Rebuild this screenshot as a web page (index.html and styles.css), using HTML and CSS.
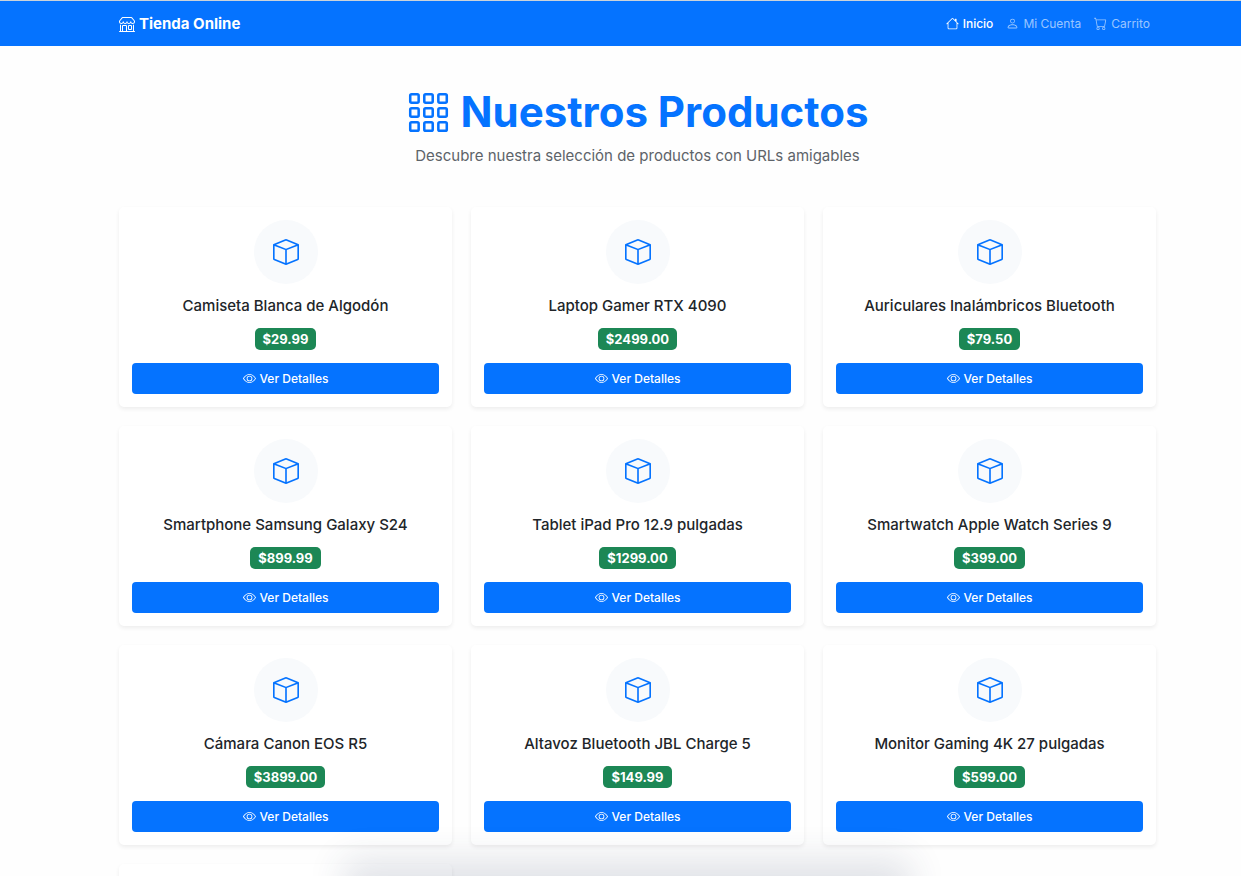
FILE: index.html
```html
<!DOCTYPE html>
<html lang="es">
<head>
<meta charset="utf-8">
<meta name="viewport" content="width=device-width, initial-scale=1">
<title>Tienda Online</title>
<link rel="stylesheet" href="styles.css">
</head>
<body>
<svg class="sprite" aria-hidden="true">
  <symbol id="box" viewBox="0 0 16 16"><path d="M8.186 1.113a.5.5 0 0 0-.372 0L1.846 3.5 8 5.961 14.154 3.5zM15 4.239l-6.5 2.6v7.922l6.5-2.6V4.24zM7.5 14.762V6.838L1 4.239v7.923zM7.443.184a1.5 1.5 0 0 1 1.114 0l7.129 2.852A.5.5 0 0 1 16 3.5v8.662a1 1 0 0 1-.629.928l-7.185 2.874a.5.5 0 0 1-.372 0L.63 13.09a1 1 0 0 1-.63-.928V3.5a.5.5 0 0 1 .314-.464z"/></symbol>
  <symbol id="eye" viewBox="0 0 16 16"><path d="M16 8s-3-5.5-8-5.5S0 8 0 8s3 5.5 8 5.5S16 8 16 8M1.173 8a13 13 0 0 1 1.66-2.043C4.12 4.668 5.88 3.5 8 3.5s3.879 1.168 5.168 2.457A13 13 0 0 1 14.828 8q-.086.13-.195.288c-.335.48-.83 1.12-1.465 1.755C11.879 11.332 10.119 12.5 8 12.5s-3.879-1.168-5.168-2.457A13 13 0 0 1 1.172 8z"/><path d="M8 5.5a2.5 2.5 0 1 0 0 5 2.5 2.5 0 0 0 0-5M4.5 8a3.5 3.5 0 1 1 7 0 3.5 3.5 0 0 1-7 0"/></symbol>
  <symbol id="shop" viewBox="0 0 16 16"><path d="M2.97 1.35A1 1 0 0 1 3.73 1h8.54a1 1 0 0 1 .76.35l2.609 3.044A1.5 1.5 0 0 1 16 5.37v.255a2.375 2.375 0 0 1-4.25 1.458A2.37 2.37 0 0 1 9.875 8 2.37 2.37 0 0 1 8 7.083 2.37 2.37 0 0 1 6.125 8a2.37 2.37 0 0 1-1.875-.917A2.375 2.375 0 0 1 0 5.625V5.37a1.5 1.5 0 0 1 .361-.976zm1.78 4.275a1.375 1.375 0 0 0 2.75 0 .5.5 0 0 1 1 0 1.375 1.375 0 0 0 2.75 0 .5.5 0 0 1 1 0 1.375 1.375 0 1 0 2.75 0V5.37a.5.5 0 0 0-.12-.325L12.27 2H3.73L1.12 5.045A.5.5 0 0 0 1 5.37v.255a1.375 1.375 0 0 0 2.75 0 .5.5 0 0 1 1 0M1.5 8.5A.5.5 0 0 1 2 9v6h1v-5a1 1 0 0 1 1-1h3a1 1 0 0 1 1 1v5h6V9a.5.5 0 0 1 1 0v6h.5a.5.5 0 0 1 0 1H.5a.5.5 0 0 1 0-1H1V9a.5.5 0 0 1 .5-.5M4 15h3v-5H4zm5-5a1 1 0 0 1 1-1h2a1 1 0 0 1 1 1v3a1 1 0 0 1-1 1h-2a1 1 0 0 1-1-1zm3 0h-2v3h2z"/></symbol>
  <symbol id="house" viewBox="0 0 16 16"><path d="M8.707 1.5a1 1 0 0 0-1.414 0L.646 8.146a.5.5 0 0 0 .708.708L2 8.207V13.5A1.5 1.5 0 0 0 3.5 15h9a1.5 1.5 0 0 0 1.5-1.5V8.207l.646.647a.5.5 0 0 0 .708-.708L13 5.793V2.5a.5.5 0 0 0-.5-.5h-1a.5.5 0 0 0-.5.5v1.293zM13 7.207V13.5a.5.5 0 0 1-.5.5h-9a.5.5 0 0 1-.5-.5V7.207l5-5z"/></symbol>
  <symbol id="person" viewBox="0 0 16 16"><path d="M8 8a3 3 0 1 0 0-6 3 3 0 0 0 0 6m2-3a2 2 0 1 1-4 0 2 2 0 0 1 4 0m4 8c0 1-1 1-1 1H3s-1 0-1-1 1-4 6-4 6 3 6 4m-1-.004c-.001-.246-.154-.986-.832-1.664C11.516 10.68 10.289 10 8 10s-3.516.68-4.168 1.332c-.678.678-.83 1.418-.832 1.664z"/></symbol>
  <symbol id="cart" viewBox="0 0 16 16"><path d="M0 1.5A.5.5 0 0 1 .5 1H2a.5.5 0 0 1 .485.379L2.89 3H14.5a.5.5 0 0 1 .491.592l-1.5 8A.5.5 0 0 1 13 12H4a.5.5 0 0 1-.491-.408L2.01 3.607 1.61 2H.5a.5.5 0 0 1-.5-.5M3.102 4l1.313 7h8.17l1.313-7zM5 12a2 2 0 1 0 0 4 2 2 0 0 0 0-4m7 0a2 2 0 1 0 0 4 2 2 0 0 0 0-4m-7 1a1 1 0 1 1 0 2 1 1 0 0 1 0-2m7 0a1 1 0 1 1 0 2 1 1 0 0 1 0-2"/></symbol>
  <symbol id="grid" viewBox="0 0 16 16"><g fill="none" stroke="currentColor" stroke-width=".9"><rect x="1.5" y="1.5" width="3" height="3" rx=".5"/><rect x="6.5" y="1.5" width="3" height="3" rx=".5"/><rect x="11.5" y="1.5" width="3" height="3" rx=".5"/><rect x="1.5" y="6.5" width="3" height="3" rx=".5"/><rect x="6.5" y="6.5" width="3" height="3" rx=".5"/><rect x="11.5" y="6.5" width="3" height="3" rx=".5"/><rect x="1.5" y="11.5" width="3" height="3" rx=".5"/><rect x="6.5" y="11.5" width="3" height="3" rx=".5"/><rect x="11.5" y="11.5" width="3" height="3" rx=".5"/></g></symbol>
</svg>
<header class="navbar">
  <div class="container navbar-row">
    <a class="brand" href="#"><svg class="icon"><use href="#shop"/></svg>Tienda Online</a>
    <nav class="nav">
      <a class="nav-link active" href="#"><svg class="icon"><use href="#house"/></svg>Inicio</a>
      <a class="nav-link" href="#"><svg class="icon"><use href="#person"/></svg>Mi Cuenta</a>
      <a class="nav-link" href="#"><svg class="icon"><use href="#cart"/></svg>Carrito</a>
    </nav>
  </div>
</header>
<main class="container">
  <div class="hero">
    <h1 class="title"><svg class="icon"><use href="#grid"/></svg>Nuestros Productos</h1>
    <p class="lead">Descubre nuestra selección de productos con URLs amigables</p>
  </div>
  <div class="products">
    <article class="card"><div class="thumb"><svg class="icon"><use href="#box"/></svg></div><h2 class="name">Camiseta Blanca de Algodón</h2><span class="price">$29.99</span><a class="btn" href="#"><svg class="icon"><use href="#eye"/></svg>Ver Detalles</a></article>
    <article class="card"><div class="thumb"><svg class="icon"><use href="#box"/></svg></div><h2 class="name">Laptop Gamer RTX 4090</h2><span class="price">$2499.00</span><a class="btn" href="#"><svg class="icon"><use href="#eye"/></svg>Ver Detalles</a></article>
    <article class="card"><div class="thumb"><svg class="icon"><use href="#box"/></svg></div><h2 class="name">Auriculares Inalámbricos Bluetooth</h2><span class="price">$79.50</span><a class="btn" href="#"><svg class="icon"><use href="#eye"/></svg>Ver Detalles</a></article>
    <article class="card"><div class="thumb"><svg class="icon"><use href="#box"/></svg></div><h2 class="name">Smartphone Samsung Galaxy S24</h2><span class="price">$899.99</span><a class="btn" href="#"><svg class="icon"><use href="#eye"/></svg>Ver Detalles</a></article>
    <article class="card"><div class="thumb"><svg class="icon"><use href="#box"/></svg></div><h2 class="name">Tablet iPad Pro 12.9 pulgadas</h2><span class="price">$1299.00</span><a class="btn" href="#"><svg class="icon"><use href="#eye"/></svg>Ver Detalles</a></article>
    <article class="card"><div class="thumb"><svg class="icon"><use href="#box"/></svg></div><h2 class="name">Smartwatch Apple Watch Series 9</h2><span class="price">$399.00</span><a class="btn" href="#"><svg class="icon"><use href="#eye"/></svg>Ver Detalles</a></article>
    <article class="card"><div class="thumb"><svg class="icon"><use href="#box"/></svg></div><h2 class="name">Cámara Canon EOS R5</h2><span class="price">$3899.00</span><a class="btn" href="#"><svg class="icon"><use href="#eye"/></svg>Ver Detalles</a></article>
    <article class="card"><div class="thumb"><svg class="icon"><use href="#box"/></svg></div><h2 class="name">Altavoz Bluetooth JBL Charge 5</h2><span class="price">$149.99</span><a class="btn" href="#"><svg class="icon"><use href="#eye"/></svg>Ver Detalles</a></article>
    <article class="card"><div class="thumb"><svg class="icon"><use href="#box"/></svg></div><h2 class="name">Monitor Gaming 4K 27 pulgadas</h2><span class="price">$599.00</span><a class="btn" href="#"><svg class="icon"><use href="#eye"/></svg>Ver Detalles</a></article>
    <article class="card"></article>
  </div>
</main>
<div class="dock-shadow"></div>
</body>
</html>
```
FILE: styles.css
```css
* { box-sizing: border-box; }
body {
  margin: 0;
  height: 100vh;
  overflow: hidden;
  position: relative;
  background: #fefefe;
  color: #212529;
  font-family: Inter, "Liberation Sans", sans-serif;
  font-size: 12px;
  line-height: 20px;
}
a { color: inherit; text-decoration: none; }
h1, h2, p { margin: 0; }
.sprite { display: none; }
.icon { width: 1em; height: 1em; fill: currentColor; flex: none; }
.container {
  max-width: 1071px;
  margin: 0 auto;
  padding-left: 34px;
}
.navbar {
  background: #0573ff;
  border-top: 1px solid #ccd3da;
  color: #fff;
}
.navbar-row {
  display: flex;
  align-items: center;
  justify-content: space-between;
  height: 45px;
}
.brand {
  display: flex;
  align-items: center;
  gap: 4px;
  font-size: 15px;
  font-weight: 700;
}
.brand .icon { width: 16px; height: 16px; }
.nav { display: flex; gap: 13px; padding-right: 6px; }
.nav-link {
  display: flex;
  align-items: center;
  gap: 4px;
  color: rgba(255, 255, 255, .6);
}
.nav-link .icon { width: 13px; height: 13px; }
.nav-link.active { color: #fff; font-weight: 500; }
.hero { padding: 39px 0 41px; text-align: center; }
.title {
  display: flex;
  align-items: center;
  justify-content: center;
  gap: 9px;
  color: #0573ff;
  font-size: 42px;
  line-height: 54px;
  font-weight: 700;
}
.title .icon { width: 45px; height: 45px; }
.lead {
  margin-top: 7px;
  color: #5d6369;
  font-size: 15px;
  line-height: 20px;
  font-weight: 400;
}
.products {
  display: grid;
  grid-template-columns: repeat(3, 1fr);
  gap: 19px;
}
.card {
  display: flex;
  flex-direction: column;
  align-items: center;
  padding: 13px;
  min-height: 200px;
  background: #fff;
  border-radius: 5px;
  box-shadow: 0 2px 4px rgba(0, 0, 0, .07);
}
.thumb {
  display: grid;
  place-items: center;
  width: 64px;
  height: 64px;
  border-radius: 50%;
  background: #f8fafc;
  color: #0573ff;
  font-size: 26px;
}
.name {
  margin: 12px 0;
  font-size: 15px;
  line-height: 20px;
  font-weight: 500;
}
.price {
  padding: 0 8px;
  border-radius: 5px;
  background: #1c8755;
  color: #fff;
  font-size: 13px;
  line-height: 22px;
  font-weight: 700;
}
.btn {
  display: flex;
  align-items: center;
  justify-content: center;
  gap: 4px;
  width: 100%;
  height: 31px;
  margin-top: 13px;
  border-radius: 4px;
  background: #0573ff;
  color: #fff;
  font-weight: 500;
}
.btn .icon { width: 13px; height: 13px; }
.dock-shadow {
  position: absolute;
  left: 29%;
  right: 28%;
  bottom: -40px;
  height: 40px;
  box-shadow: 0 0 36px 16px rgba(40, 60, 90, .14);
}
```
